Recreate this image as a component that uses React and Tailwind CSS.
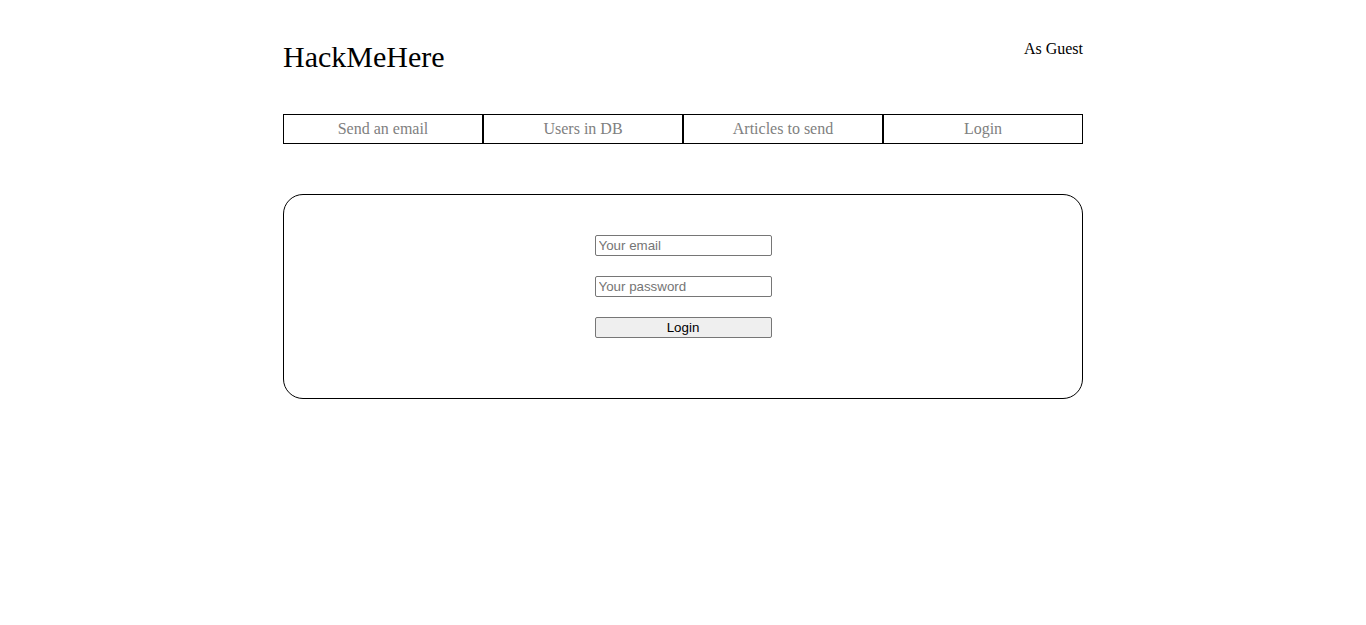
import React from 'react';

const navItems = ['Send an email', 'Users in DB', 'Articles to send', 'Login'];

export default function App() {
  return (
    <div className="min-h-[625px] bg-white text-black" style={{ fontFamily: '"Liberation Serif", "Times New Roman", serif' }}>
      <div className="w-[800px] mx-auto pt-[39px]">
        <header className="flex items-start justify-between">
          <h1 className="text-[30px] leading-[36px] font-normal">HackMeHere</h1>
          <span className="text-[16px] leading-[18px] mt-[1px]">As Guest</span>
        </header>

        <nav className="grid grid-cols-4 mt-[39px]">
          {navItems.map((item) => (
            <a key={item} href="#" className="h-[30px] border border-black flex items-center justify-center text-[16px] text-[#808080] no-underline">
              {item}
            </a>
          ))}
        </nav>

        <div className="mt-[50px] border border-black rounded-[20px] pt-[40px] pb-[60px] flex flex-col items-center gap-[20px]" style={{ fontFamily: '"Liberation Sans", Arial, sans-serif' }}>
          <input type="email" placeholder="Your email" className="w-[177px] h-[21px] border border-[#767676] rounded-[2px] px-[3px] text-[13.33px] placeholder:text-[#757575] outline-none" />
          <input type="password" placeholder="Your password" className="w-[177px] h-[21px] border border-[#767676] rounded-[2px] px-[3px] text-[13.33px] placeholder:text-[#757575] outline-none" />
          <button type="submit" className="w-[177px] h-[21px] border border-[#767676] rounded-[2px] bg-[#efefef] text-[13.33px] text-black leading-none">
            Login
          </button>
        </div>
      </div>
    </div>
  );
}
